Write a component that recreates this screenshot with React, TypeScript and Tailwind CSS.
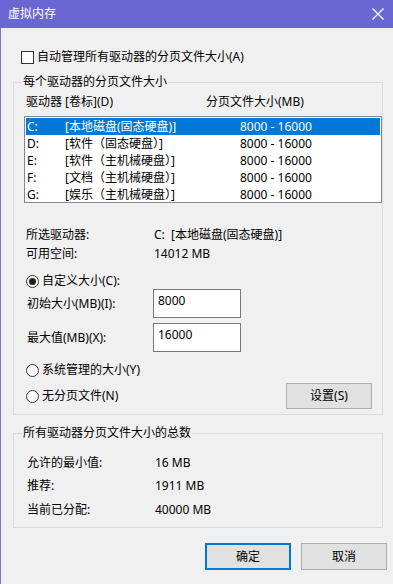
import React from "react"

const font = {
  fontFamily: '"Segoe UI", "Noto Sans", "Noto Sans CJK SC", sans-serif',
}

const drives = [
  { letter: "C:", label: "[本地磁盘(固态硬盘)]", size: "8000 - 16000" },
  { letter: "D:", label: "[软件（固态硬盘）]", size: "8000 - 16000" },
  { letter: "E:", label: "[软件（主机械硬盘）]", size: "8000 - 16000" },
  { letter: "F:", label: "[文档（主机械硬盘）]", size: "8000 - 16000" },
  { letter: "G:", label: "[娱乐（主机械硬盘）]", size: "8000 - 16000" },
]

const Radio = ({ checked, label }: { checked?: boolean; label: string }) => (
  <div className="flex h-4 items-center">
    <span className="flex h-[13px] w-[13px] items-center justify-center rounded-full border border-[#333] bg-white">
      {checked && <span className="h-[7px] w-[7px] rounded-full bg-[#222]" />}
    </span>
    <span className="ml-[3px]">{label}</span>
  </div>
)

const GroupBox = ({ title, children, className = "" }: { title: string; children: React.ReactNode; className?: string }) => (
  <fieldset className={`w-[370px] min-w-0 border border-[#dcdcdc] px-[8px] ${className}`}>
    <legend className="h-4 px-px leading-4">{title}</legend>
    {children}
  </fieldset>
)

export default function App() {
  return (
    <div className="flex h-[584px] w-[393px] flex-col bg-[#f0f0f0] text-[12px] leading-4 text-black" style={font}>
      {/* 标题栏 */}
      <div className="flex h-[28px] shrink-0 items-center justify-between bg-[#6b67d2] pl-[8px] pr-[9px] text-white">
        <span>虚拟内存</span>
        <svg width="12" height="12" viewBox="0 0 12 12" stroke="white" strokeWidth="1.2">
          <path d="M0.5 0.5 L11.5 11.5 M11.5 0.5 L0.5 11.5" />
        </svg>
      </div>

      <div className="flex flex-1 flex-col border-l border-[#7c78c9] pl-[12px]">
        {/* 自动管理 */}
        <div className="mt-[21px] flex h-4 items-center pl-[8px]">
          <span className="h-[13px] w-[13px] border border-[#333] bg-white" />
          <span className="ml-[3px]">自动管理所有驱动器的分页文件大小(A)</span>
        </div>

        <GroupBox title="每个驱动器的分页文件大小" className="mt-[9px] pb-[5px]">
          <div className="mt-[4px] flex pl-[4px]">
            <span className="w-[180px]">驱动器 [卷标](D)</span>
            <span>分页文件大小(MB)</span>
          </div>

          <div className="ml-[2px] mt-[6px] h-[87px] w-[358px] border border-[#828790] bg-white p-px">
            {drives.map((d, i) => (
              <div
                key={d.letter}
                className={`flex h-[17px] items-center pl-px ${i === 0 ? "bg-[#0078d7] text-white" : ""}`}
              >
                <span className="w-[38px]">{d.letter}</span>
                <span className="w-[175px]">{d.label}</span>
                <span>{d.size}</span>
              </div>
            ))}
          </div>

          <div className="mt-[24px] flex pl-[4px]">
            <span className="w-[128px]">所选驱动器:</span>
            <span>C:&nbsp;&nbsp;[本地磁盘(固态硬盘)]</span>
          </div>
          <div className="mt-[3px] flex pl-[4px]">
            <span className="w-[128px]">可用空间:</span>
            <span>14012 MB</span>
          </div>

          <div className="mt-[11px] pl-[4px]">
            <Radio checked label="自定义大小(C):" />
          </div>

          <div className="flex items-center pl-[5px]">
            <span className="w-[126px]">初始大小(MB)(I):</span>
            <div className="h-[29px] w-[88px] border border-[#7a7a7a] bg-white pl-[4px] pt-[3px]">8000</div>
          </div>
          <div className="mt-[5px] flex items-center pl-[5px]">
            <span className="w-[126px]">最大值(MB)(X):</span>
            <div className="h-[29px] w-[88px] border border-[#7a7a7a] bg-white pl-[4px] pt-[3px]">16000</div>
          </div>

          <div className="mt-[10px] pl-[4px]">
            <Radio label="系统管理的大小(Y)" />
          </div>
          <div className="mt-[5px] flex h-[26px] items-center justify-between pl-[4px] pr-[2px]">
            <Radio label="无分页文件(N)" />
            <button className="h-[26px] w-[86px] border border-[#adadad] bg-[#e1e1e1]">设置(S)</button>
          </div>
        </GroupBox>

        <GroupBox title="所有驱动器分页文件大小的总数" className="mt-[10px] pb-[9px]">
          <div className="mt-[14px] flex pl-[5px]">
            <span className="w-[128px]">允许的最小值:</span>
            <span>16 MB</span>
          </div>
          <div className="mt-[7px] flex pl-[5px]">
            <span className="w-[128px]">推荐:</span>
            <span>1911 MB</span>
          </div>
          <div className="mt-[8px] flex pl-[5px]">
            <span className="w-[128px]">当前已分配:</span>
            <span>40000 MB</span>
          </div>
        </GroupBox>

        <div className="mt-[15px] flex w-[374px] justify-end gap-[10px]">
          <button className="h-[27px] w-[86px] border-2 border-[#0078d7] bg-[#e1e1e1]">确定</button>
          <button className="h-[27px] w-[86px] border border-[#adadad] bg-[#e1e1e1]">取消</button>
        </div>
      </div>
    </div>
  )
}
